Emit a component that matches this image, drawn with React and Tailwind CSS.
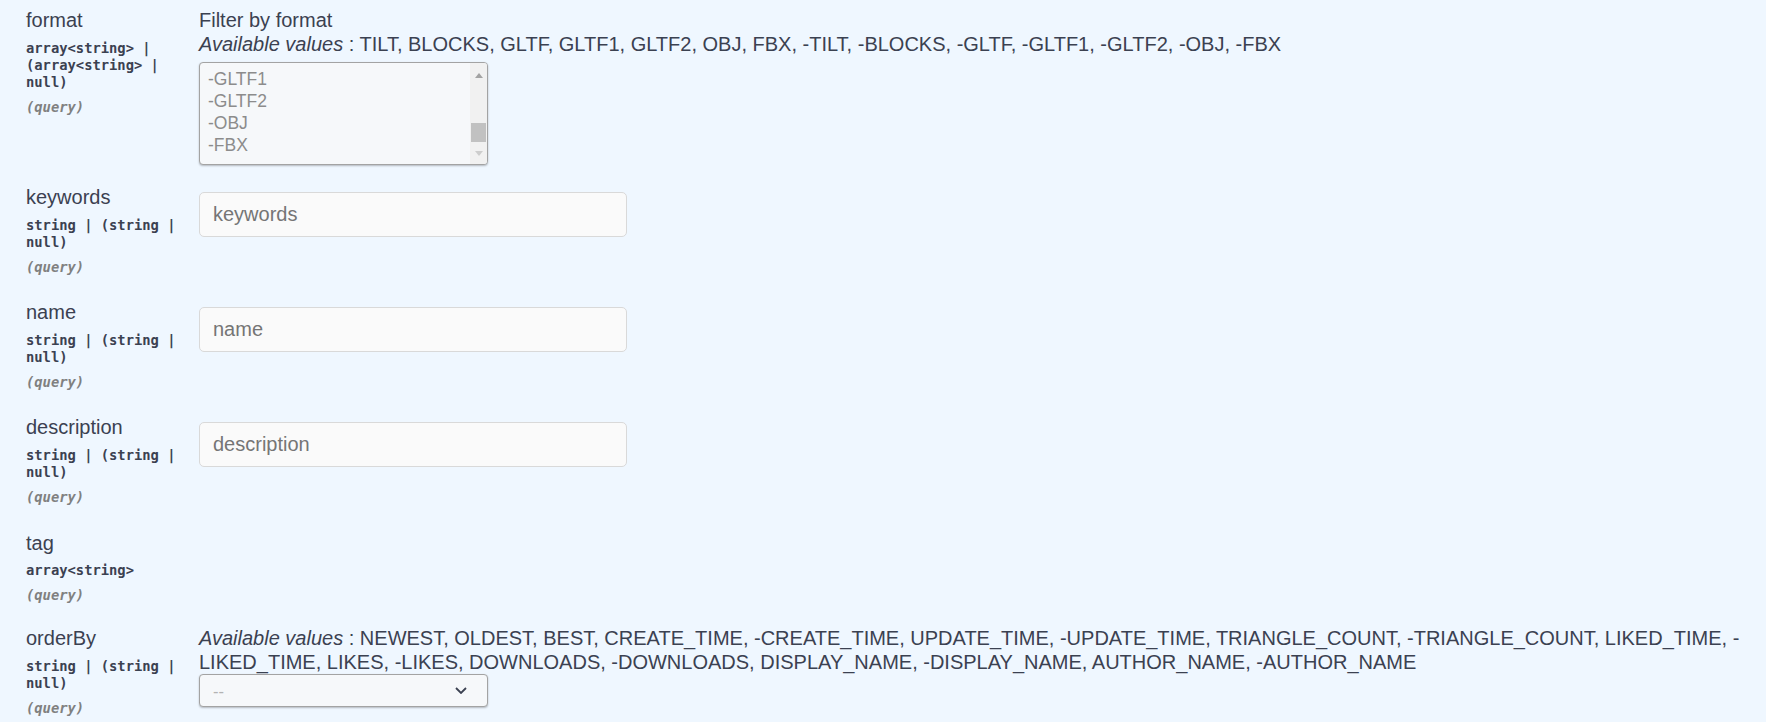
import React from 'react';

const sans = { fontFamily: '"Liberation Sans", Arial, sans-serif' };

const FORMAT_VALUES = 'TILT, BLOCKS, GLTF, GLTF1, GLTF2, OBJ, FBX, -TILT, -BLOCKS, -GLTF, -GLTF1, -GLTF2, -OBJ, -FBX';
const ORDER_VALUES =
  'NEWEST, OLDEST, BEST, CREATE_TIME, -CREATE_TIME, UPDATE_TIME, -UPDATE_TIME, TRIANGLE_COUNT, -TRIANGLE_COUNT, LIKED_TIME, -LIKED_TIME, LIKES, -LIKES, DOWNLOADS, -DOWNLOADS, DISPLAY_NAME, -DISPLAY_NAME, AUTHOR_NAME, -AUTHOR_NAME';

function Available({ values }) {
  return (
    <div className="leading-[24px]">
      <i>Available values</i> : {values}
    </div>
  );
}

// disabled multi select, scrolled to the bottom
function MultiSelect() {
  const visible = ['-GLTF1', '-GLTF2', '-OBJ', '-FBX'];
  return (
    <div className="mt-[6px] flex h-[103px] w-[289px] overflow-hidden rounded-[4px] border border-[#a3a3a3] bg-[#f6f8fa] shadow-[0_1px_2px_rgba(0,0,0,0.25)]">
      <div className="flex-1 pl-[8px] pt-[5px] text-[17.5px] leading-[22px] text-[#8c8c8c]">
        {visible.map((v) => (
          <div key={v}>{v}</div>
        ))}
      </div>
      <div className="flex w-[17px] flex-col bg-[#f1f1f1]">
        <div className="flex h-[24px] items-center justify-center">
          <svg width="8" height="5" viewBox="0 0 8 5">
            <path d="M0 5 L4 0 L8 5Z" fill="#a3a3a3" />
          </svg>
        </div>
        <div className="h-[36px]" />
        <div className="mx-[1px] h-[19px] bg-[#c1c1c1]" />
        <div className="flex h-[22px] items-center justify-center">
          <svg width="8" height="5" viewBox="0 0 8 5">
            <path d="M0 0 L8 0 L4 5Z" fill="#cdcdcd" />
          </svg>
        </div>
      </div>
    </div>
  );
}

function TextInput({ placeholder }) {
  return (
    <input
      readOnly
      placeholder={placeholder}
      className="mt-[7px] h-[45px] w-[428px] rounded-[5px] border border-[#d9d9d9] bg-[#fafafa] px-[13px] text-[20px] text-[#3b4151] outline-none placeholder:text-[#757575]"
      style={sans}
    />
  );
}

function OrderSelect() {
  return (
    <div className="flex h-[33px] w-[289px] items-center justify-between rounded-[4px] border border-[#a3a3a3] bg-[#f6f8fa] pl-[13px] pr-[20px] shadow-[0_1px_2px_rgba(0,0,0,0.25)]">
      <span className="text-[16.5px] leading-none text-[#b3b3b3]">--</span>
      <svg width="12" height="7" viewBox="0 0 12 7">
        <path d="M1 1 L6 6 L11 1" fill="none" stroke="#3b4151" strokeWidth="1.8" />
      </svg>
    </div>
  );
}

const params = [
  {
    name: 'format',
    type: 'array<string> | (array<string> | null)',
    pb: 'pb-[20px]',
    body: (
      <>
        <div className="leading-[24px]">Filter by format</div>
        <Available values={FORMAT_VALUES} />
        <MultiSelect />
      </>
    ),
  },
  { name: 'keywords', type: 'string | (string | null)', pb: 'pb-6', body: <TextInput placeholder="keywords" /> },
  { name: 'name', type: 'string | (string | null)', pb: 'pb-6', body: <TextInput placeholder="name" /> },
  { name: 'description', type: 'string | (string | null)', pb: 'pb-6', body: <TextInput placeholder="description" /> },
  { name: 'tag', type: 'array<string>', pb: 'pb-[22px]', body: null },
  {
    name: 'orderBy',
    type: 'string | (string | null)',
    pb: 'pb-6',
    body: (
      <>
        <Available values={ORDER_VALUES} />
        <OrderSelect />
      </>
    ),
  },
];

export default function App() {
  return (
    <div className="min-h-screen bg-[#eff7ff] pl-[26px] pt-[8px] text-[20px] text-[#3b4151]" style={sans}>
      {params.map((p) => (
        <div key={p.name} className={`flex ${p.pb}`}>
          {/* nombre / tipo / ubicación */}
          <div className="w-[173px] shrink-0">
            <div className="leading-[24px]">{p.name}</div>
            <div
              className="mt-[7.5px] w-[165px] text-[13.8px] font-bold leading-[17.4px] text-[#3b4151]"
              style={{ fontFamily: '"DejaVu Sans Mono", "Liberation Mono", monospace' }}
            >
              {p.type}
            </div>
            <div
              className="mt-[7.5px] text-[13.8px] font-bold italic leading-[17.4px] text-[#808080]"
              style={{ fontFamily: '"DejaVu Sans Mono", "Liberation Mono", monospace' }}
            >
              (query)
            </div>
          </div>
          <div className="w-[1555px]">{p.body}</div>
        </div>
      ))}
    </div>
  );
}
